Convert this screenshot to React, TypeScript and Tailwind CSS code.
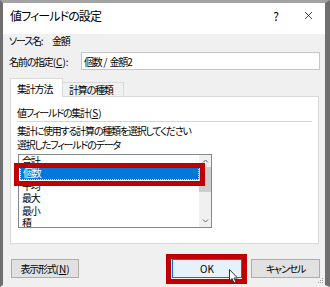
import { X } from "lucide-react";

const items = ["合計", "個数", "平均", "最大", "最小", "積"];

export default function App() {
  return (
    <div className="w-[330px] h-[287px] overflow-hidden bg-[#f0f0f0] border-t-[3px] border-t-[#a3a3a3] border-l-[3px] border-l-[#6f6f6f] border-r-[5px] border-r-[#6f6f6f] border-b-[2px] border-b-[#f0f0f0] font-['Noto_Sans_CJK_JP',sans-serif] text-[10px] tracking-[-1.2px] text-black [font-feature-settings:'palt'] whitespace-nowrap relative">
      {/* タイトルバー */}
      <div className="h-[31px] bg-white flex items-center pl-[7px] pb-[6px]">
        <span className="flex-1 leading-none text-[12px] tracking-[-0.9px]">値フィールドの設定</span>
        <span className="w-[14px] text-center text-[12px] tracking-normal mr-[19px]">?</span>
        <X className="w-[13px] h-[13px] mr-[10px]" strokeWidth={1.3} />
      </div>

      <div className="pl-[6px] pr-[5px]">
        <div className="h-[14px] leading-[14px] flex">
          <span className="w-[43px]">ソース名:</span>
          <span>金額</span>
        </div>

        <div className="mt-[4px] flex items-center">
          <span className="w-[72px]">
            名前の指定<span className="tracking-normal">(<span className="underline">C</span>):</span>
          </span>
          <div className="w-[239px] h-[18px] bg-white border border-[#c5c5c5] flex items-center pl-[2px]">
            個数 <span className="tracking-normal mx-[2px]">/</span> 金額<span className="tracking-normal">2</span>
          </div>
        </div>

        {/* タブ */}
        <div className="mt-[8px] pl-[1px] flex items-end relative z-10 -mb-px">
          <div className="w-[53px] h-[19px] bg-white border border-b-0 border-[#d9d9d9] flex items-center pl-[6px]">
            集計方法
          </div>
          <div className="w-[61px] h-[15px] bg-[#f0f0f0] border border-l-0 border-[#d9d9d9] flex items-center pl-[6px]">
            計算の種類
          </div>
        </div>

        <div className="ml-[1px] w-[309px] h-[148px] bg-white border border-[#d9d9d9] pt-[9px] px-[6px]">
          <div className="h-[14px] leading-[14px]">
            値フィールドの集計<span className="tracking-normal">(<span className="underline">S</span>)</span>
          </div>
          <div className="mt-[1px] h-px bg-[#d5d5d5] w-[295px]" />
          <div className="mt-[2px] h-[14px] leading-[14px]">
            集計に使用する計算の種類を選択してください
          </div>
          <div className="h-[14px] leading-[14px]">選択したフィールドのデータ</div>

          <div className="relative mt-[2px] ml-px w-[194px] h-[74px] border border-[#828790] flex">
            <div className="flex-1 overflow-hidden -mt-[0.5px]">
              {items.map((item, i) => (
                <div
                  key={item}
                  className={`h-[12.5px] leading-[12.5px] pl-[3px] ${
                    i === 1
                      ? "bg-[#0078d7] text-white ml-px pl-[2px] outline-1 outline-dotted outline-white -outline-offset-1"
                      : ""
                  }`}
                >
                  {item}
                </div>
              ))}
            </div>
            {/* スクロールバー */}
            <div className="w-[12px] h-full bg-[#f0f0f0] flex flex-col items-center">
              <svg width="7" height="12" viewBox="0 0 7 12" className="shrink-0">
                <path d="M1 7.5 L3.5 5 L6 7.5" fill="none" stroke="#606060" strokeWidth="1" />
              </svg>
              <div className="w-full h-[25px] bg-[#cdcdcd]" />
              <div className="flex-1" />
              <svg width="7" height="12" viewBox="0 0 7 12" className="shrink-0">
                <path d="M1 4.5 L3.5 7 L6 4.5" fill="none" stroke="#606060" strokeWidth="1" />
              </svg>
            </div>
            {/* 赤枠 */}
            <div className="absolute left-[-5px] top-[8px] w-[191px] h-[23px] border-[5px] border-[#c00000] pointer-events-none" />
          </div>
        </div>

        {/* ボタン */}
        <div className="mt-[15px] flex items-center">
          <button className="ml-[2px] w-[68px] h-[19px] bg-[#e1e1e1] border border-[#adadad] leading-none">
            表示形式<span className="tracking-normal">(<span className="underline">N</span>)</span>
          </button>
          <div className="flex-1" />
          <div className="relative">
            <button className="w-[70px] h-[19px] bg-[#e5f1fb] border border-[#0078d7] leading-none tracking-normal">
              OK
            </button>
            <div className="absolute left-[-6px] top-[-5px] w-[81px] h-[30px] border-[5px] border-[#c00000] pointer-events-none" />
            <svg
              width="10"
              height="16"
              viewBox="0 0 10 16"
              className="absolute left-[57px] top-[10px]"
            >
              <path
                d="M0.5 0.5 L0.5 12 L3 9.5 L5 14 L7 13 L5 9 L8.5 9 Z"
                fill="white"
                stroke="#333"
                strokeWidth="1"
                strokeLinejoin="round"
              />
            </svg>
          </div>
          <button className="ml-[9px] w-[69px] h-[19px] bg-[#e1e1e1] border border-[#adadad] leading-none">
            キャンセル
          </button>
        </div>
      </div>

      {/* サイズ変更グリップ */}
      <svg width="6" height="6" viewBox="0 0 6 6" className="absolute right-[1px] bottom-[1px]">
        <rect x="4" y="0" width="1" height="1" fill="#a0a0a0" />
        <rect x="2" y="2" width="1" height="1" fill="#a0a0a0" />
        <rect x="4" y="2" width="1" height="1" fill="#a0a0a0" />
        <rect x="0" y="4" width="1" height="1" fill="#a0a0a0" />
        <rect x="2" y="4" width="1" height="1" fill="#a0a0a0" />
        <rect x="4" y="4" width="1" height="1" fill="#a0a0a0" />
      </svg>
    </div>
  );
}
